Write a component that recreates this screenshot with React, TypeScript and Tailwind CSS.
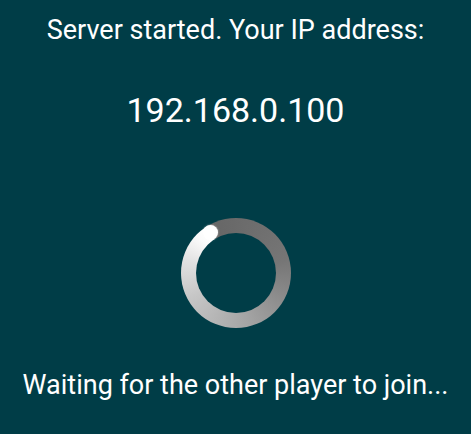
export default function App() {
  return (
    <div className="flex h-[434px] w-[471px] flex-col items-center bg-[#003d47] font-['Roboto',sans-serif] text-white">
      <p className="mt-[14px] text-[27px] leading-[32px]">Server started. Your IP address:</p>
      <p className="mt-[45px] text-[34px] leading-[38px]">192.168.0.100</p>
      <div className="relative mt-[89px] h-[110px] w-[110px] shrink-0">
        <div className="absolute inset-0 rounded-full bg-[conic-gradient(from_328deg,#666666_0%,#6a6a6a_8%,#767676_30%,#a4a4a4_55%,#c6c6c6_76%,#e2e2e2_88%,#fbfbfb_96%,#ffffff_100%)]" />
        <div className="absolute inset-[15px] rounded-full bg-[#003d47]" />
        <div className="absolute left-[22px] top-[7px] h-[15px] w-[15px] rounded-full bg-white shadow-[0_0_2px_0_rgba(255,255,255,0.6)]" />
      </div>
      <p className="mt-[41px] text-[27px] leading-[32px]">Waiting for the other player to join...</p>
    </div>
  );
}
